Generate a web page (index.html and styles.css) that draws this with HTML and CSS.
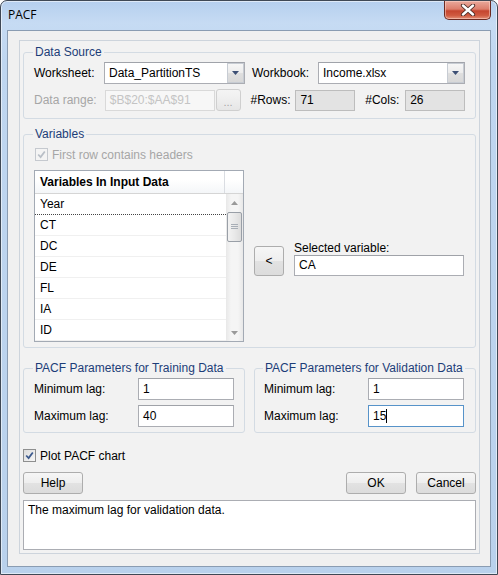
FILE: index.html
```html
<!DOCTYPE html>
<html>
<head>
<meta charset="utf-8">
<title>PACF</title>
<link rel="stylesheet" href="styles.css">
</head>
<body>
<div class="window">
  <div class="titlebar">
    <span class="title">PACF</span>
    <div class="close">
      <svg width="16" height="12" viewBox="0 0 16 12"><path d="M3 1.5 L13 10.5 M13 1.5 L3 10.5" stroke="#4a2a24" stroke-width="4.2" stroke-linecap="round"/><path d="M3 1.5 L13 10.5 M13 1.5 L3 10.5" stroke="#ffffff" stroke-width="2.4" stroke-linecap="round"/></svg>
    </div>
  </div>
  <div class="client">
    <div class="panel">
      <fieldset class="group ds">
        <legend>Data Source</legend>
        <div class="row r1">
          <span class="lbl l-ws">Worksheet:</span>
          <div class="combo c-ws"><span class="val">Data_PartitionTS</span><span class="drop"><svg width="7" height="4" viewBox="0 0 7 4"><path d="M0 0 H7 L3.5 4 Z" fill="#3c4f74"/></svg></span></div>
          <span class="lbl l-wb">Workbook:</span>
          <div class="combo c-wb"><span class="val">Income.xlsx</span><span class="drop"><svg width="7" height="4" viewBox="0 0 7 4"><path d="M0 0 H7 L3.5 4 Z" fill="#3c4f74"/></svg></span></div>
        </div>
        <div class="row r2">
          <span class="lbl l-ws dis">Data range:</span>
          <div class="field disabled f-range">$B$20:$AA$91</div>
          <div class="btn btn-dis dots">...</div>
          <span class="lbl l-rows">#Rows:</span>
          <div class="field ro f-num">71</div>
          <span class="lbl l-cols">#Cols:</span>
          <div class="field ro f-num">26</div>
        </div>
      </fieldset>

      <fieldset class="group vars">
        <legend>Variables</legend>
        <div class="chkrow hdr">
          <span class="cb cb-dis"><svg width="9" height="9" viewBox="0 0 9 9"><path d="M1.2 4.5 L3.6 7 L7.8 1.5" fill="none" stroke="#b9bfc7" stroke-width="1.8"/></svg></span>
          <span class="dis">First row contains headers</span>
        </div>
        <div class="varsbody">
          <div class="list">
            <div class="lhead"><div class="hc1">Variables In Input Data</div><div class="hc2"></div></div>
            <div class="lbody">
              <div class="items">
                <div class="item focus">Year</div>
                <div class="item">CT</div>
                <div class="item">DC</div>
                <div class="item">DE</div>
                <div class="item">FL</div>
                <div class="item">IA</div>
                <div class="item">ID</div>
              </div>
              <div class="vscroll">
                <div class="sarrow"><svg width="7" height="4" viewBox="0 0 7 4"><path d="M0 4 H7 L3.5 0 Z" fill="#9a9a9a"/></svg></div>
                <div class="strack"><div class="thumb"><svg width="7" height="6" viewBox="0 0 7 6"><path d="M0 0.5 H7 M0 2.5 H7 M0 4.5 H7" stroke="#a8aeb6" stroke-width="1"/></svg></div></div>
                <div class="sarrow"><svg width="7" height="4" viewBox="0 0 7 4"><path d="M0 0 H7 L3.5 4 Z" fill="#9a9a9a"/></svg></div>
              </div>
            </div>
          </div>
          <div class="selside">
            <div class="btn btn-lt">&lt;</div>
            <div class="selcol">
              <span class="sellbl">Selected variable:</span>
              <div class="field f-sel">CA</div>
            </div>
          </div>
        </div>
      </fieldset>

      <div class="params">
        <fieldset class="group pg pg-train">
          <legend>PACF Parameters for Training Data</legend>
          <div class="prow"><span class="plbl">Minimum lag:</span><div class="field f-lag">1</div></div>
          <div class="prow"><span class="plbl">Maximum lag:</span><div class="field f-lag">40</div></div>
        </fieldset>
        <fieldset class="group pg pg-val">
          <legend>PACF Parameters for Validation Data</legend>
          <div class="prow"><span class="plbl">Minimum lag:</span><div class="field f-lag">1</div></div>
          <div class="prow"><span class="plbl">Maximum lag:</span><div class="field f-lag focused">15<span class="caret"></span></div></div>
        </fieldset>
      </div>

      <div class="chkrow plot">
        <span class="cb cb-on"><svg width="9" height="9" viewBox="0 0 9 9"><path d="M1.2 4.5 L3.6 7 L7.8 1.5" fill="none" stroke="#3c5a8e" stroke-width="1.8"/></svg></span>
        <span>Plot PACF chart</span>
      </div>

      <div class="buttons">
        <div class="btn b-std">Help</div>
        <div class="spacer"></div>
        <div class="btn b-std">OK</div>
        <div class="btn b-std b-cancel">Cancel</div>
      </div>

      <div class="desc">The maximum lag for validation data.</div>
    </div>
  </div>
</div>
</body>
</html>
```

FILE: styles.css
```css
* { box-sizing: border-box; }
html, body { margin: 0; padding: 0; }
body {
  width: 498px;
  height: 575px;
  font-family: "Liberation Sans", Arial, sans-serif;
  font-size: 12px;
  color: #000;
  background: #ffffff;
  overflow: hidden;
}

.window {
  width: 498px;
  height: 575px;
  border: 1px solid #3f4855;
  border-radius: 7px 7px 0 0;
  background: linear-gradient(180deg, #b5cfee 0px, #c6dbf3 22px, #bfd6f0 60px, #b9d1ec 100%);
  box-shadow: inset 0 0 0 1px rgba(255,255,255,0.55);
  display: flex;
  flex-direction: column;
  padding: 0 6px 7px 6px;
}

.titlebar {
  height: 29px;
  flex: none;
  display: flex;
  justify-content: space-between;
  align-items: flex-start;
  padding-left: 1px;
}
.title {
  margin-top: 6px;
  font-family: "Open Sans", "Liberation Sans", sans-serif;
  font-size: 12px;
  line-height: 16px;
  color: #000;
}
.close {
  width: 47px;
  height: 19px;
  margin-top: 0;
  border: 1px solid #6b2a22;
  border-top: none;
  border-radius: 0 0 5px 5px;
  background: linear-gradient(180deg, #e9a99c 0%, #dc7e6c 45%, #c5452f 55%, #cf5a40 80%, #e39078 100%);
  box-shadow: inset 0 0 0 1px rgba(255,220,210,0.5);
  display: flex;
  align-items: center;
  justify-content: center;
}

.client {
  flex: 1;
  border: 1px solid #8a9cb2;
  background: #f0f0f0;
  padding: 9px 10px 12px 11px;
  display: flex;
  flex-direction: column;
}

.panel {
  flex: 1;
  border: 1px solid #cdd4dc;
  background: #f2f2f2;
  padding: 4px 3px 3px 3px;
  display: flex;
  flex-direction: column;
}

/* group boxes */
.group {
  margin: 0;
  border: 1px solid #d3dbe3;
  border-radius: 3px;
  padding: 0 10px;
  min-width: 0;
}
.group legend {
  padding: 0 2px;
  margin-left: -1px;
  font-size: 12px;
  line-height: 14px;
  color: #1c3d78;
}

.ds { height: 74px; }
.row {
  display: flex;
  align-items: center;
}
.r1 { margin-top: 3px; height: 22px; }
.r2 { margin-top: 5px; height: 22px; }

.lbl { white-space: nowrap; }
.l-ws { width: 70px; }
.l-wb { width: 66px; margin-left: 7px; }
.l-rows { width: 45px; margin-left: 10px; }
.l-cols { width: 40px; margin-left: 10px; }
.dis { color: #a6a6a6; }

.combo {
  height: 22px;
  border: 1px solid #abadb3;
  border-top-color: #a0a3aa;
  background: #fff;
  display: flex;
  align-items: stretch;
}
.combo .val {
  flex: 1;
  padding-left: 4px;
  line-height: 20px;
  white-space: nowrap;
  overflow: hidden;
}
.combo .drop {
  width: 17px;
  border: 1px solid #c7ccd3;
  background: linear-gradient(180deg, #f6f6f6 0%, #ececec 50%, #dfdfdf 51%, #d8d8d8 100%);
  display: flex;
  align-items: center;
  justify-content: center;
}
.c-ws { width: 141px; }
.c-wb { width: 147px; }

.field {
  height: 21px;
  border: 1px solid #abadb3;
  border-top-color: #9fa2a8;
  background: #fff;
  padding-left: 4px;
  line-height: 19px;
  white-space: nowrap;
  overflow: hidden;
}
.field.disabled {
  border-color: #d9d9d9;
  background: #f7f7f7;
  color: #c4c4c4;
}
.field.ro {
  background: #e3e3e3;
  border-color: #bdbdbd;
}
.f-range { width: 110px; margin-left: 1px; }
.f-num { width: 60px; }

.btn {
  border: 1px solid #adadad;
  border-radius: 3px;
  background: linear-gradient(180deg, #f6f6f6 0%, #eeeeee 50%, #e2e2e2 51%, #dcdcdc 100%);
  display: flex;
  align-items: center;
  justify-content: center;
  white-space: nowrap;
}
.btn-dis {
  border-color: #cfcfcf;
  background: linear-gradient(180deg, #f4f4f4 0%, #eeeeee 50%, #e6e6e6 100%);
  color: #a6a6a6;
}
.dots {
  width: 25px;
  height: 22px;
  margin-left: 1px;
  font-size: 11px;
  padding-top: 3px;
}

/* variables */
.vars { height: 221px; margin-top: 8px; }
.chkrow {
  display: flex;
  align-items: center;
  height: 15px;
}
.chkrow.hdr { margin-top: 6px; padding-left: 1px; }
.cb {
  width: 13px;
  height: 13px;
  border: 1px solid #8e8f8f;
  background: linear-gradient(135deg, #dcdcdc 0%, #f7f7f7 100%);
  display: flex;
  align-items: center;
  justify-content: center;
  margin-right: 4px;
  flex: none;
}
.cb-dis {
  border-color: #c5c9cf;
  background: #f4f4f4;
}

.varsbody {
  display: flex;
  align-items: flex-start;
  margin-top: 8px;
}
.list {
  width: 210px;
  height: 172px;
  border: 1px solid #a3aab4;
  background: #fff;
  display: flex;
  flex-direction: column;
}
.lhead {
  height: 23px;
  display: flex;
  border-bottom: 1px solid #d5d5d5;
  background: linear-gradient(180deg, #ffffff 0%, #ffffff 40%, #f4f6f8 100%);
}
.hc1 {
  width: 190px;
  border-right: 1px solid #dadde2;
  font-weight: bold;
  padding-left: 5px;
  line-height: 22px;
}
.hc2 { flex: 1; }
.lbody {
  flex: 1;
  display: flex;
}
.items { flex: 1; }
.item {
  height: 21px;
  line-height: 20px;
  padding-left: 5px;
  border-bottom: 1px solid #f0f0f0;
}
.item.focus { border-bottom: 1px dotted #444; }
.vscroll {
  width: 17px;
  display: flex;
  flex-direction: column;
  background: linear-gradient(90deg, #e8e8e8 0%, #f5f5f5 30%, #f5f5f5 70%, #e8e8e8 100%);
}
.sarrow {
  height: 17px;
  display: flex;
  align-items: center;
  justify-content: center;
}
.strack { flex: 1; padding: 1px 1px 0 1px; }
.thumb {
  height: 30px;
  border: 1px solid #999fa7;
  border-radius: 2px;
  background: linear-gradient(90deg, #f3f3f3 0%, #e9e9e9 50%, #dcdcdc 100%);
  display: flex;
  align-items: center;
  justify-content: center;
}

.selside {
  display: flex;
  align-items: flex-end;
  margin-top: 71px;
  margin-left: 10px;
}
.btn-lt {
  width: 30px;
  height: 30px;
  font-size: 12px;
}
.selcol {
  display: flex;
  flex-direction: column;
  margin-left: 10px;
}
.sellbl { line-height: 14px; }
.f-sel { width: 170px; }

/* params */
.params {
  display: grid;
  grid-template-columns: 222px 222px;
  column-gap: 9px;
  margin-top: 13px;
}
.pg { height: 72px; }
.pg-val { padding-left: 9px; }
.prow {
  display: flex;
  align-items: center;
  height: 22px;
  margin-top: 5px;
}
.prow:first-of-type { margin-top: 3px; }
.plbl { width: 104px; }
.f-lag { width: 96px; height: 22px; line-height: 20px; }
.field.focused { border-color: #5793c9; }
.caret {
  display: inline-block;
  width: 1px;
  height: 14px;
  background: #000;
  vertical-align: -3px;
}

.chkrow.plot { margin-top: 16px; height: 13px; }

.buttons {
  display: flex;
  margin-top: 10px;
  height: 22px;
}
.b-std { width: 60px; height: 22px; }
.spacer { flex: 1; }
.b-cancel { margin-left: 10px; }

.desc {
  margin-top: 6px;
  height: 50px;
  border: 1px solid #abadb3;
  background: #fff;
  padding: 2px 4px;
  line-height: 15px;
}
```
